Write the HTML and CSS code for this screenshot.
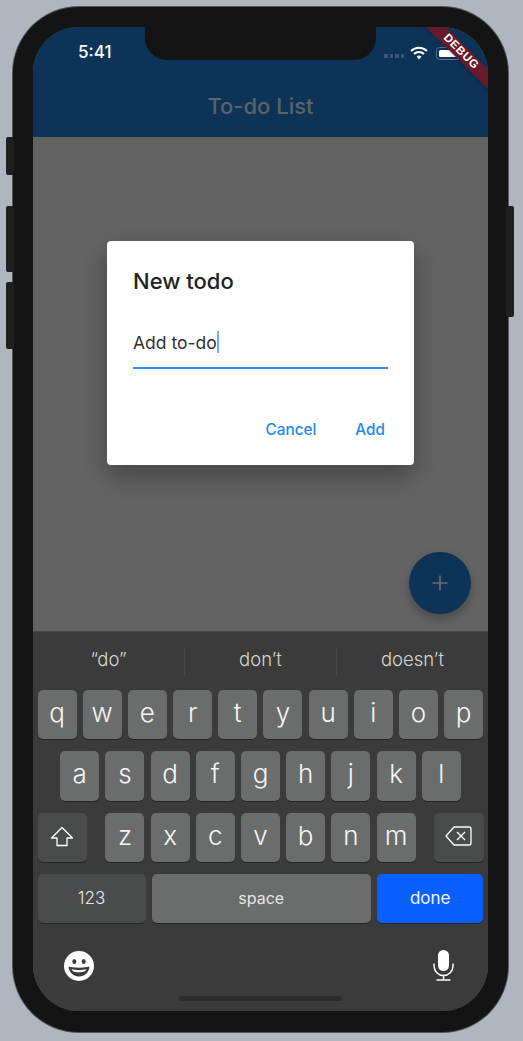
FILE: index.html
```html
<!DOCTYPE html>
<html lang="en">
<head>
  <meta charset="UTF-8">
  <meta name="viewport" content="width=device-width, initial-scale=1.0">
  <title>To-do List</title>
  <link rel="stylesheet" href="styles.css">
</head>
<body>
  <div class="phone">
    <span class="side-btn side-mute"></span>
    <span class="side-btn side-up"></span>
    <span class="side-btn side-down"></span>
    <span class="side-btn side-power"></span>

    <div class="screen">
      <div class="notch"></div>
      <div class="debug-band">DEBUG</div>

      <header class="app-bar">
        <div class="status-bar">
          <span class="clock">5:41</span>
          <div class="status-icons">
            <span class="signal"><i></i><i></i><i></i><i></i></span>
            <svg class="wifi" width="18" height="14" viewBox="0 0 18 14">
              <path d="M1 5a11.500 11.500 0 0 1 16 0" fill="none" stroke="#fff" stroke-width="2"/>
              <path d="M4 8a7.200 7.200 0 0 1 10 0" fill="none" stroke="#fff" stroke-width="2"/>
              <path d="M6.500 10.600a3.600 3.600 0 0 1 5 0L9 13.500z" fill="#fff"/>
            </svg>
            <span class="battery"><span class="battery-fill"></span></span>
          </div>
        </div>
        <h1 class="app-title">To-do List</h1>
      </header>

      <main class="content">
        <div class="dialog">
          <h2 class="dialog-title">New todo</h2>
          <div class="field"><span>Add to-do</span><span class="caret"></span></div>
          <div class="dialog-actions">
            <span class="action">Cancel</span>
            <span class="action">Add</span>
          </div>
        </div>
        <div class="fab">
          <svg width="16" height="16" viewBox="0 0 16 16">
            <path d="M8 0.500v15M0.500 8h15" stroke="#6b6f73" stroke-width="1.600"/>
          </svg>
        </div>
      </main>

      <section class="keyboard">
        <div class="suggestions">
          <span class="suggestion">“do”</span>
          <span class="suggestion">don’t</span>
          <span class="suggestion">doesn’t</span>
        </div>
        <div class="keys">
          <div class="row">
            <span class="key">q</span><span class="key">w</span><span class="key">e</span><span class="key">r</span><span class="key">t</span><span class="key">y</span><span class="key">u</span><span class="key">i</span><span class="key">o</span><span class="key">p</span>
          </div>
          <div class="row row-center">
            <span class="key">a</span><span class="key">s</span><span class="key">d</span><span class="key">f</span><span class="key">g</span><span class="key">h</span><span class="key">j</span><span class="key">k</span><span class="key">l</span>
          </div>
          <div class="row row-split">
            <span class="key key-fn">
              <svg width="24" height="21" viewBox="0 0 24 21">
                <path d="M12 1.500L1.500 12H7v7.500h10V12h5.500z" fill="none" stroke="#fff" stroke-width="1.300" stroke-linejoin="round"/>
              </svg>
            </span>
            <div class="row">
              <span class="key">z</span><span class="key">x</span><span class="key">c</span><span class="key">v</span><span class="key">b</span><span class="key">n</span><span class="key">m</span>
            </div>
            <span class="key key-fn">
              <svg width="27" height="20" viewBox="0 0 27 20">
                <path d="M9 1h15a2 2 0 0 1 2 2v14a2 2 0 0 1-2 2H9L1 10z" fill="none" stroke="#fff" stroke-width="1.300" stroke-linejoin="round"/>
                <path d="M12 6l8 8M20 6l-8 8" stroke="#fff" stroke-width="1.300"/>
              </svg>
            </span>
          </div>
          <div class="row">
            <span class="key key-fn key-num">123</span>
            <span class="key key-space">space</span>
            <span class="key key-done">done</span>
          </div>
        </div>
        <div class="kb-bottom">
          <svg width="30" height="30" viewBox="0 0 30 30">
            <circle cx="15" cy="15" r="15" fill="#fff"/>
            <ellipse cx="10.300" cy="10.500" rx="2" ry="2.500" fill="#3a3b3a"/>
            <ellipse cx="19.700" cy="10.500" rx="2" ry="2.500" fill="#3a3b3a"/>
            <path d="M4.500 15.500c4 1.500 17 1.500 21 0c-.5 6-5 10-10.500 10s-10-4-10.500-10z" fill="#3a3b3a"/>
            <path d="M7.500 18.200c4 .9 11 .9 15 0c-1 2-2 3-7.500 3s-6.500-1-7.500-3z" fill="#fff"/>
          </svg>
          <svg width="21" height="31" viewBox="0 0 21 31">
            <rect x="5" y="0" width="11" height="21" rx="5.500" fill="#fff"/>
            <path d="M1 13.500v2.500a9.500 9.500 0 0 0 19 0v-2.500M10.500 25.500v4.500M3.500 30h14" fill="none" stroke="#fff" stroke-width="1.500"/>
          </svg>
        </div>
        <div class="home-bar"></div>
      </section>
    </div>
  </div>
</body>
</html>
```

FILE: styles.css
```css
* {
  box-sizing: border-box;
}
html, body {
  height: 100%;
}
body {
  margin: 0;
  padding: 7px 15px 9px 13px;
  background-color: #b1b5bf;
  font-family: Inter, "Liberation Sans", sans-serif;
  overflow: hidden;
}
.phone {
  position: relative;
  height: 1025px;
  padding: 20px;
  background-color: #141414;
  border-radius: 66px;
  box-shadow: 0 0 0 1px #55575b;
}
.side-btn {
  position: absolute;
  width: 8px;
  background-color: #1f1f1f;
  border-radius: 2px;
}
.side-mute {
  left: -7px;
  top: 130px;
  height: 38px;
}
.side-up {
  left: -7px;
  top: 199px;
  height: 66px;
}
.side-down {
  left: -7px;
  top: 275px;
  height: 67px;
}
.side-power {
  right: -6px;
  top: 199px;
  height: 111px;
}
.screen {
  position: relative;
  display: flex;
  flex-direction: column;
  height: 984px;
  border-radius: 46px;
  overflow: hidden;
  background-color: #636363;
}
.notch {
  position: absolute;
  left: 112px;
  top: 0;
  width: 231px;
  height: 33px;
  background-color: #141414;
  border-radius: 0 0 22px 22px;
  z-index: 3;
}
.debug-band {
  position: absolute;
  left: 378px;
  top: 18px;
  width: 100px;
  height: 13.500px;
  background-color: #691a28;
  color: #fff;
  font-family: "Liberation Sans", sans-serif;
  font-size: 11.500px;
  font-weight: 700;
  line-height: 13.500px;
  letter-spacing: 0.6px;
  text-align: center;
  transform: rotate(45deg);
  box-shadow: 0 1px 3px rgba(0,0,0,0.2);
  z-index: 4;
}

/* app bar */
.app-bar {
  height: 110px;
  background-color: #0e3358;
  flex: none;
}
.status-bar {
  display: flex;
  justify-content: space-between;
  align-items: center;
  height: 50px;
  padding: 0 0 0 45px;
}
.clock {
  color: #fff;
  font-size: 17px;
  font-weight: 500;
}
.status-icons {
  display: flex;
  align-items: center;
  width: 104px;
  margin-top: 2px;
}
.signal {
  display: flex;
  gap: 2px;
  margin-top: 5px;
}
.signal i {
  width: 3.500px;
  height: 4px;
  background-color: #3b5a7c;
  border-radius: 1px;
}
.wifi {
  margin-left: 6px;
  margin-top: -1px;
}
.battery {
  width: 27px;
  height: 13px;
  margin-left: 8px;
  padding: 2px;
  border: 1px solid #4f7196;
  border-radius: 3.500px;
}
.battery-fill {
  display: block;
  width: 100%;
  height: 100%;
  background-color: #fff;
  border-radius: 1.500px;
}
.app-title {
  margin: 17px 0 0;
  color: #5c6268;
  font-size: 22px;
  font-weight: 450;
  line-height: 24px;
  text-align: center;
}

/* body and dialog */
.content {
  position: relative;
  flex: 1;
  padding: 104px 0 0 74px;
  background-color: #636363;
}
.dialog {
  width: 307px;
  height: 224px;
  padding: 27px 26px 0;
  background-color: #fff;
  border-radius: 4px;
  box-shadow: 0 11px 24px rgba(0,0,0,0.3);
}
.dialog-title {
  margin: 0;
  color: #212121;
  font-size: 22px;
  font-weight: 450;
  line-height: 26px;
}
.field {
  display: flex;
  align-items: center;
  height: 50px;
  margin-top: 25px;
  padding-top: 5px;
  padding-bottom: 7px;
  color: #303030;
  font-size: 17.500px;
  border-bottom: 2.500px solid #2f8cf2;
}
.caret {
  width: 2.500px;
  height: 22px;
  background-color: #6fb0f5;
}
.dialog-actions {
  display: flex;
  justify-content: flex-end;
  gap: 39px;
  margin-top: 51px;
  padding-right: 3px;
}
.action {
  color: #2288f0;
  font-size: 15.300px;
  font-weight: 500;
  line-height: 20px;
}
.fab {
  position: absolute;
  right: 17px;
  top: 415px;
  display: flex;
  align-items: center;
  justify-content: center;
  width: 62px;
  height: 62px;
  background-color: #0e3358;
  border-radius: 50%;
  box-shadow: 0 5px 10px rgba(0,0,0,0.25);
}

/* keyboard */
.keyboard {
  position: relative;
  flex: none;
  height: 380px;
  background-color: #3a3b3a;
  border-top: 1px solid #464746;
}
.suggestions {
  display: flex;
  align-items: center;
  height: 58px;
}
.suggestion {
  flex: 1;
  height: 28px;
  color: #d6d6d6;
  font-size: 18.500px;
  font-weight: 300;
  line-height: 25px;
  text-align: center;
}
.suggestion + .suggestion {
  border-left: 1px solid #4a4b4a;
}
.keys {
  display: flex;
  flex-direction: column;
  gap: 12px;
  padding: 0 4.500px;
}
.row {
  display: flex;
  gap: 6.200px;
}
.row-center {
  justify-content: center;
}
.row-split {
  justify-content: space-between;
}
.key {
  display: flex;
  align-items: center;
  justify-content: center;
  flex: none;
  width: 39px;
  height: 49.300px;
  padding-bottom: 4px;
  background-color: #6b6c6c;
  border-radius: 5px;
  box-shadow: 0 1px 0 #262626;
  color: #f5f5f5;
  font-size: 26px;
  font-weight: 300;
}
.key-fn {
  width: 49.500px;
  padding-bottom: 2px;
  background-color: #4a4b4b;
}
.key-num {
  width: 108px;
  color: #e6e6e6;
  font-size: 17px;
}
.key-space {
  width: 219px;
  padding-bottom: 2px;
  color: #e6e6e6;
  font-size: 16px;
  font-weight: 400;
}
.key-done {
  width: 106.600px;
  padding-bottom: 2px;
  background-color: #0a60ff;
  color: #f2f6ff;
  font-size: 17px;
  font-weight: 400;
}
.kb-bottom {
  display: flex;
  justify-content: space-between;
  align-items: center;
  height: 31px;
  margin-top: 27px;
  padding: 0 34px 0 30.500px;
}
.home-bar {
  position: absolute;
  left: 146px;
  top: 364px;
  width: 163px;
  height: 5px;
  background-color: #2b2c2b;
  border-radius: 3px;
}
```
